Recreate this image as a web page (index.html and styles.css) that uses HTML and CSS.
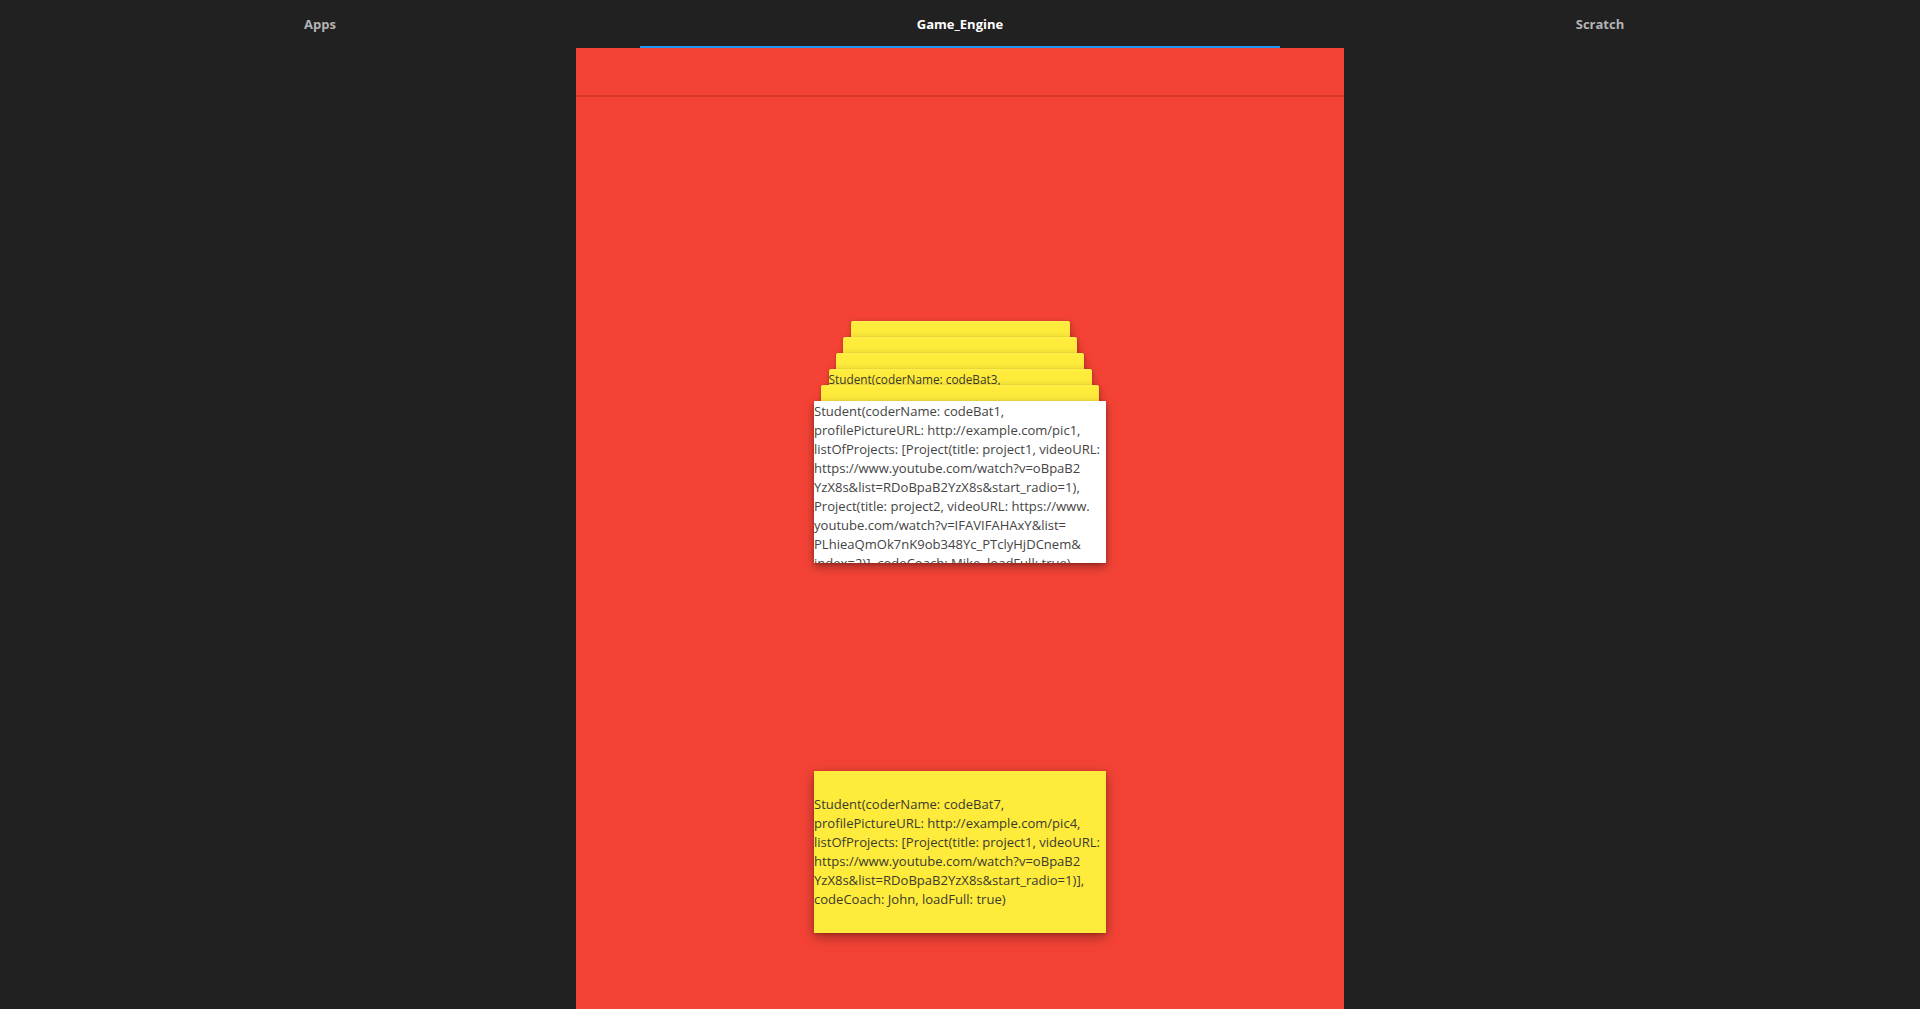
FILE: index.html
```html
<!DOCTYPE html>
<html>
<head>
<meta charset="utf-8">
<link rel="stylesheet" href="styles.css">
</head>
<body>
<nav class="tabs">
  <div class="tab">Apps</div>
  <div class="tab active">Game_Engine</div>
  <div class="tab">Scratch</div>
</nav>
<main class="panel">
  <header class="appbar"></header>
  <section class="content">
    <div class="stack">
      <div class="card back b5"></div>
      <div class="card back b4"></div>
      <div class="card back b3"></div>
      <div class="card back b2"><div class="small-text">Student(coderName: codeBat3,</div></div>
      <div class="card back b1"></div>
      <div class="card front">
        <div class="card-text">Student(coderName: codeBat1,<br>profilePictureURL: http://example.com/pic1,<br>listOfProjects: [Project(title: project1, videoURL:<br>https://www.youtube.com/watch?v=oBpaB2<br>YzX8s&amp;list=RDoBpaB2YzX8s&amp;start_radio=1),<br>Project(title: project2, videoURL: https://www.<br>youtube.com/watch?v=IFAVIFAHAxY&amp;list=<br>PLhieaQmOk7nK9ob348Yc_PTclyHjDCnem&amp;<br>index=2)], codeCoach: Mike, loadFull: true)</div>
      </div>
    </div>
    <div class="card single">
      <div class="card-text">Student(coderName: codeBat7,<br>profilePictureURL: http://example.com/pic4,<br>listOfProjects: [Project(title: project1, videoURL:<br>https://www.youtube.com/watch?v=oBpaB2<br>YzX8s&amp;list=RDoBpaB2YzX8s&amp;start_radio=1)],<br>codeCoach: John, loadFull: true)</div>
    </div>
  </section>
</main>
</body>
</html>
```

FILE: styles.css
```css
html, body {
  margin: 0;
  padding: 0;
  height: 100%;
  background: #212121;
  overflow: hidden;
}
body {
  font-family: "Open Sans", "Noto Sans", sans-serif;
}
.tabs {
  display: grid;
  grid-template-columns: 1fr 1fr 1fr;
  align-items: start;
  height: 48px;
}
.tab {
  display: flex;
  align-items: center;
  justify-content: center;
  height: 48px;
  padding-top: 2px;
  box-sizing: border-box;
  font-weight: 700;
  font-size: 13px;
  color: #b4b4b4;
  border-bottom: 2px solid transparent;
}
.tab.active {
  color: #ffffff;
  border-bottom-color: #2196f3;
}
.panel {
  width: 768px;
  margin: 0 auto;
  background: #f44336;
  height: calc(100% - 48px);
  display: flex;
  flex-direction: column;
}
.appbar {
  height: 47px;
  border-bottom: 2px solid rgba(120, 20, 10, 0.25);
  flex: none;
}
.content {
  display: flex;
  flex-direction: column;
  align-items: center;
}
.stack {
  position: relative;
  width: 292px;
  height: 242px;
  margin-top: 224px;
}
.card {
  background: #ffeb3b;
  color: #3a3a30;
  font-size: 13.05px;
  line-height: 19px;
  box-sizing: border-box;
}
.card.back {
  position: absolute;
  height: 130px;
  border-radius: 2px 2px 0 0;
  box-shadow: 0 1px 3px rgba(0,0,0,0.22), 2px 2px 8px rgba(0,0,0,0.18);
  background: linear-gradient(#fff04a 0, #ffeb3b 3px, #fde83a 100%);
}
.b5 { top: 0;  left: 36.5px; width: 219px; }
.b4 { top: 16px; left: 29px; width: 234px; }
.b3 { top: 32px; left: 22px; width: 248px; }
.b2 { top: 48px; left: 14.5px; width: 263px; }
.b1 { top: 64px; left: 7px; width: 278px; }
.card.front {
  position: absolute;
  top: 80px;
  left: 0;
  width: 292px;
  height: 162px;
  background: #ffffff;
  color: #444444;
  overflow: hidden;
  box-shadow: 0 4px 10px rgba(0,0,0,0.35), 0 1px 3px rgba(0,0,0,0.2);
}
.card-text {
  white-space: nowrap;
}
.front .card-text {
  padding-top: 1px;
}
.small-text {
  white-space: nowrap;
  font-size: 11.8px;
  line-height: 16px;
  padding-top: 2px;
}
.card.single {
  margin-top: 208px;
  width: 292px;
  height: 162px;
  display: flex;
  align-items: center;
  box-shadow: 0 4px 12px rgba(0,0,0,0.35), 0 1px 3px rgba(0,0,0,0.2);
}
```
